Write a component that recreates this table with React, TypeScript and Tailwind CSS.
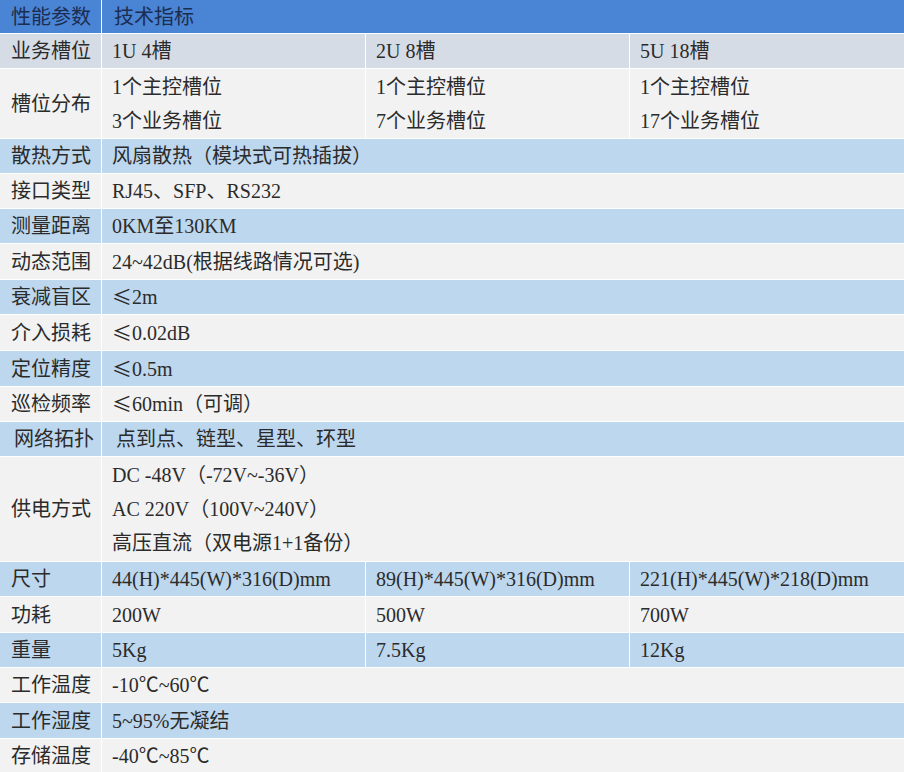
/**
 * Spec table page
 */

import React from "react";

type Row = {
  label: string;
  values: string[][];
  tone: "gray" | "light" | "blue";
  height: string;
  indent?: boolean;
};

const ROWS: Row[] = [
  { label: "业务槽位", values: [["1U 4槽"], ["2U 8槽"], ["5U 18槽"]], tone: "gray", height: "h-[34px]" },
  {
    label: "槽位分布",
    values: [
      ["1个主控槽位", "3个业务槽位"],
      ["1个主控槽位", "7个业务槽位"],
      ["1个主控槽位", "17个业务槽位"],
    ],
    tone: "light",
    height: "h-[69px]",
  },
  { label: "散热方式", values: [["风扇散热（模块式可热插拔）"]], tone: "blue", height: "h-[34px]" },
  { label: "接口类型", values: [["RJ45、SFP、RS232"]], tone: "light", height: "h-[34px]" },
  { label: "测量距离", values: [["0KM至130KM"]], tone: "blue", height: "h-[34px]" },
  { label: "动态范围", values: [["24~42dB(根据线路情况可选)"]], tone: "light", height: "h-[35px]" },
  { label: "衰减盲区", values: [["≤2m"]], tone: "blue", height: "h-[34px]" },
  { label: "介入损耗", values: [["≤0.02dB"]], tone: "light", height: "h-[35px]" },
  { label: "定位精度", values: [["≤0.5m"]], tone: "blue", height: "h-[35px]" },
  { label: "巡检频率", values: [["≤60min（可调）"]], tone: "light", height: "h-[34px]" },
  {
    label: "网络拓扑",
    values: [["点到点、链型、星型、环型"]],
    tone: "blue",
    height: "h-[34px]",
    indent: true,
  },
  {
    label: "供电方式",
    values: [["DC -48V（-72V~-36V）", "AC 220V（100V~240V）", "高压直流（双电源1+1备份）"]],
    tone: "light",
    height: "h-[104px]",
  },
  {
    label: "尺寸",
    values: [["44(H)*445(W)*316(D)mm"], ["89(H)*445(W)*316(D)mm"], ["221(H)*445(W)*218(D)mm"]],
    tone: "blue",
    height: "h-[34px]",
  },
  { label: "功耗", values: [["200W"], ["500W"], ["700W"]], tone: "light", height: "h-[35px]" },
  { label: "重量", values: [["5Kg"], ["7.5Kg"], ["12Kg"]], tone: "blue", height: "h-[34px]" },
  { label: "工作温度", values: [["-10℃~60℃"]], tone: "light", height: "h-[34px]" },
  { label: "工作湿度", values: [["5~95%无凝结"]], tone: "blue", height: "h-[35px]" },
  { label: "存储温度", values: [["-40℃~85℃"]], tone: "light", height: "h-[33px]" },
];

const TONE = {
  gray: "bg-[#d6dce5]",
  light: "bg-[#f2f2f2]",
  blue: "bg-[#bdd7ee]",
};

// the ≤ sign is drawn full width, like the CJK glyphs around it
const Text = ({ text }: { text: string }) => {
  if (!text.startsWith("≤")) return <>{text}</>;
  return (
    <>
      <span className="font-['Noto_Sans_CJK_SC']">≤</span>
      {text.slice(1)}
    </>
  );
};

const App = () => {
  return (
    <div className="flex h-[772px] w-[904px] flex-col gap-px overflow-hidden bg-white font-['Liberation_Serif','Noto_Sans_CJK_SC',serif] text-[20px] text-[#2b2b2b]">
      <div className="flex h-[33px] shrink-0 gap-px">
        <div className="flex w-[101px] items-center bg-[#4a84d4] pl-[11px] text-[#1c2d52]">
          性能参数
        </div>
        <div className="flex flex-1 items-center bg-[#4a84d4] pl-[12px] text-[#1c2d52]">
          技术指标
        </div>
      </div>
      {ROWS.map((row, index) => (
        <div key={index} className={`flex shrink-0 gap-px ${row.height}`}>
          <div
            className={`flex w-[101px] items-center ${TONE[row.tone]} ${
              row.indent ? "pl-[14px]" : "pl-[11px]"
            }`}
          >
            {row.label}
          </div>
          {row.values.map((cell, i) => (
            <div
              key={i}
              className={`flex flex-col justify-center ${TONE[row.tone]} ${
                row.values.length === 1 || i === 2 ? "flex-1" : "w-[263px]"
              } ${row.indent ? "pl-[14px]" : "pl-[10px]"}`}
            >
              {cell.map((line, j) => (
                <div key={j} className="flex h-[34px] shrink-0 items-center whitespace-nowrap">
                  <Text text={line} />
                </div>
              ))}
            </div>
          ))}
        </div>
      ))}
    </div>
  );
};

export default App;
